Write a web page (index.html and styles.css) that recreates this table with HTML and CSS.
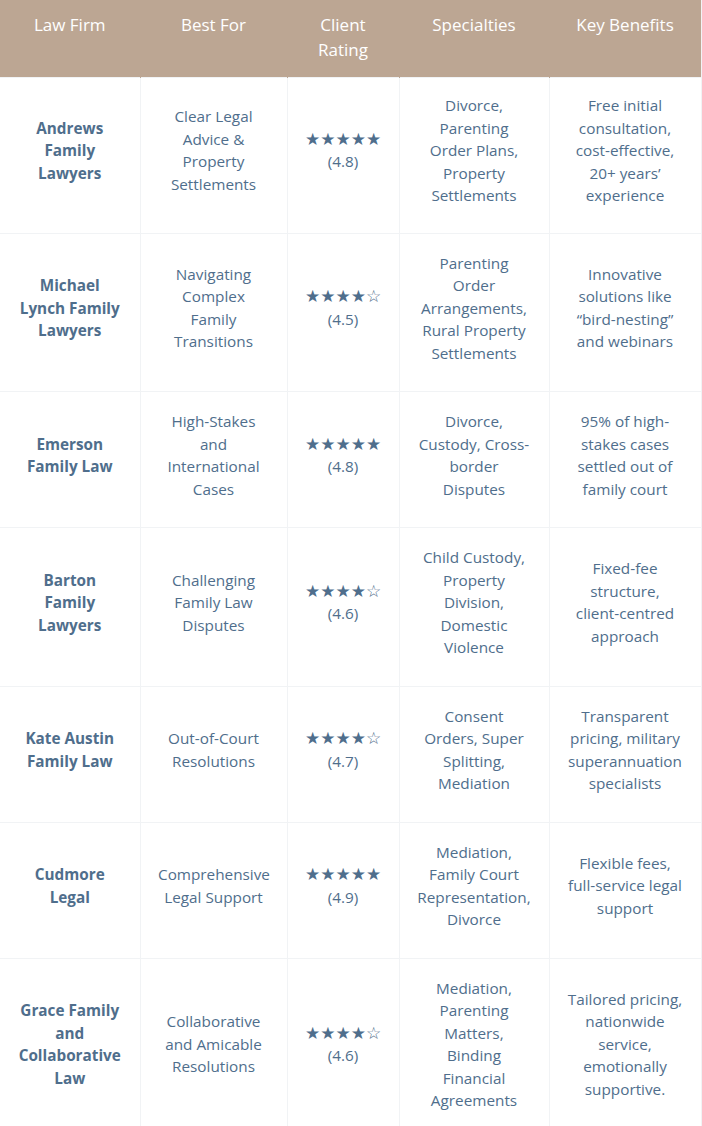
FILE: index.html
```html
<!DOCTYPE html>
<html lang="en">
<head>
<meta charset="utf-8">
<title>Family Law Firms Comparison</title>
<link rel="stylesheet" href="styles.css">
</head>
<body>
<table class="compare">
  <colgroup>
    <col class="c1"><col class="c2"><col class="c3"><col class="c4"><col class="c5">
  </colgroup>
  <thead>
    <tr>
      <th>Law Firm</th>
      <th>Best For</th>
      <th>Client Rating</th>
      <th>Specialties</th>
      <th>Key Benefits</th>
    </tr>
  </thead>
  <tbody>
    <tr>
      <td class="firm">Andrews Family Lawyers</td>
      <td>Clear Legal Advice &amp; Property Settlements</td>
      <td class="rating"><span class="stars">★★★★★</span><br>(4.8)</td>
      <td>Divorce, Parenting Order Plans, Property Settlements</td>
      <td>Free initial consultation, cost-effective, 20+ years’ experience</td>
    </tr>
    <tr>
      <td class="firm">Michael Lynch Family Lawyers</td>
      <td>Navigating Complex Family Transitions</td>
      <td class="rating"><span class="stars">★★★★☆</span><br>(4.5)</td>
      <td>Parenting Order Arrangements, Rural Property Settlements</td>
      <td>Innovative solutions like “bird-nesting” and webinars</td>
    </tr>
    <tr>
      <td class="firm">Emerson Family Law</td>
      <td>High-Stakes and International Cases</td>
      <td class="rating"><span class="stars">★★★★★</span><br>(4.8)</td>
      <td>Divorce, Custody, Cross-border Disputes</td>
      <td>95% of high-stakes cases settled out of family court</td>
    </tr>
    <tr>
      <td class="firm">Barton Family Lawyers</td>
      <td>Challenging Family Law Disputes</td>
      <td class="rating"><span class="stars">★★★★☆</span><br>(4.6)</td>
      <td>Child Custody, Property Division, Domestic Violence</td>
      <td>Fixed-fee structure, client-centred approach</td>
    </tr>
    <tr>
      <td class="firm">Kate Austin Family Law</td>
      <td>Out-of-Court Resolutions</td>
      <td class="rating"><span class="stars">★★★★☆</span><br>(4.7)</td>
      <td>Consent Orders, Super Splitting, Mediation</td>
      <td>Transparent pricing, military superannuation specialists</td>
    </tr>
    <tr>
      <td class="firm">Cudmore Legal</td>
      <td>Comprehensive Legal Support</td>
      <td class="rating"><span class="stars">★★★★★</span><br>(4.9)</td>
      <td>Mediation, Family Court Representation, Divorce</td>
      <td>Flexible fees, full-service legal support</td>
    </tr>
    <tr>
      <td class="firm">Grace Family and Collaborative Law</td>
      <td>Collaborative and Amicable Resolutions</td>
      <td class="rating"><span class="stars">★★★★☆</span><br>(4.6)</td>
      <td>Mediation, Parenting Matters, Binding Financial Agreements</td>
      <td>Tailored pricing, nationwide service, emotionally supportive.</td>
    </tr>
  </tbody>
</table>
</body>
</html>
```
FILE: styles.css
```css
html, body {
  margin: 0;
  padding: 0;
  background: #ffffff;
}

body {
  font-family: "Open Sans", "DejaVu Sans", sans-serif;
  color: #4f6e8c;
}

.compare {
  width: 701px;
  border-collapse: collapse;
  table-layout: fixed;
}

.c1 { width: 140px; }
.c2 { width: 147px; }
.c3 { width: 112px; }
.c4 { width: 150px; }
.c5 { width: 152px; }

.compare th {
  background: #bca693;
  color: #ffffff;
  font-weight: 400;
  font-size: 17px;
  line-height: 25px;
  padding: 12px 12px 15px;
  text-align: center;
  vertical-align: top;
  border-right: 1px solid #bca693;
}

.compare th:last-child {
  border-right: 1px solid #f1f3f5;
}

.compare td {
  font-size: 15.3px;
  line-height: 22.5px;
  padding: 18px 17.5px 27px;
  text-align: center;
  vertical-align: middle;
  border: 1px solid #f1f3f5;
  border-left: 0;
}

.compare tbody tr:first-child td {
  padding-top: 16px;
  padding-bottom: 26px;
}

.compare td.firm {
  font-weight: 700;
}

.stars {
  font-family: "DejaVu Sans", sans-serif;
  font-size: 17px;
  letter-spacing: 0;
}
```
